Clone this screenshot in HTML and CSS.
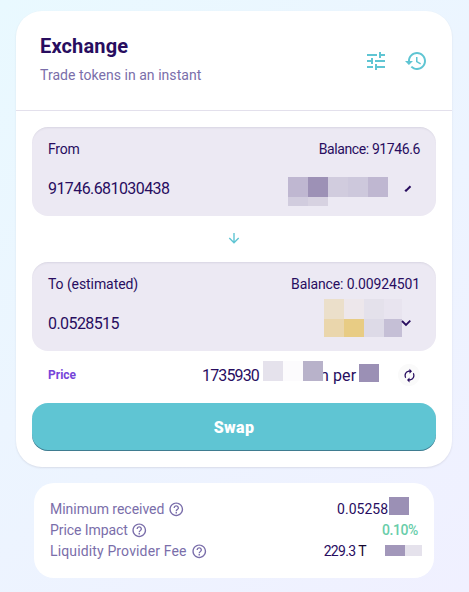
FILE: index.html
```html
<!DOCTYPE html>
<html lang="en">
<head>
<meta charset="utf-8">
<title>Exchange</title>
<link rel="stylesheet" href="styles.css">
</head>
<body>
<svg width="0" height="0" class="defs">
  <symbol id="help" viewBox="0 0 24 24"><path d="M11 18h2v-2h-2v2zm1-16C6.480 2 2 6.480 2 12s4.480 10 10 10 10-4.480 10-10S17.520 2 12 2zm0 18c-4.410 0-8-3.590-8-8s3.590-8 8-8 8 3.590 8 8-3.590 8-8 8zm0-14c-2.210 0-4 1.790-4 4h2c0-1.100.9-2 2-2s2 .9 2 2c0 2-3 1.750-3 5h2c0-2.250 3-2.500 3-5 0-2.210-1.790-4-4-4z"/></symbol>
</svg>
<main class="card">
  <header class="head">
    <div>
      <h1>Exchange</h1>
      <p>Trade tokens in an instant</p>
    </div>
    <div class="tools">
      <svg width="24" height="24" viewBox="0 0 24 24"><path d="M3 17v2h6v-2H3zM3 5v2h10V5H3zm10 16v-2h8v-2h-8v-2h-2v6h2zM7 9v2H3v2h4v2h2V9H7zm14 4v-2H11v2h10zm-6-4h2V7h4V5h-4V3h-2v6z"/></svg>
      <svg width="24" height="24" viewBox="0 0 24 24"><path d="M13 3c-4.970 0-9 4.030-9 9H1l3.890 3.890.07.14L9 12H6c0-3.870 3.130-7 7-7s7 3.130 7 7-3.130 7-7 7c-1.930 0-3.680-.79-4.940-2.060l-1.420 1.420C8.270 19.990 10.510 21 13 21c4.970 0 9-4.030 9-9s-4.030-9-9-9zm-1 5v5l4.280 2.540.72-1.210-3.500-2.080V8H12z"/></svg>
    </div>
  </header>
  <section class="body">
    <div class="field">
      <div class="row label"><span class="t-from">From</span><span class="t-bal1">Balance: 91746.6</span></div>
      <div class="row amount"><span>91746.681030438</span>
        <svg class="token" width="132" height="38" viewBox="0 0 132 38" shape-rendering="crispEdges">
          <path fill="#bfb7d1" d="M0 8h20v20H0zM80 8h20v20H80z"/><path fill="#9d91b6" d="M20 8h20v20H20z"/><path fill="#d1ccde" d="M40 8h20v20H40zM0 28h20v9H0z"/><path fill="#cdc8dc" d="M60 8h20v20H60z"/><path fill="#d7d2e1" d="M20 28h20v9H20z"/>
          <path shape-rendering="auto" fill="none" stroke="#280d5f" stroke-width="2" d="M117 21l1 .7 4.500-4.500"/>
        </svg>
      </div>
    </div>
    <svg class="arrow" width="16" height="16" viewBox="0 0 16 16"><path d="M8 3v9.500M3.300 8l4.700 4.700L12.700 8" fill="none" stroke="#5fc5d3" stroke-width="1.400"/></svg>
    <div class="field">
      <div class="row label"><span class="t-to">To (estimated)</span><span class="t-bal2">Balance: 0.00924501</span></div>
      <div class="row amount"><span>0.0528515</span>
        <svg class="token token-to" width="96" height="48" viewBox="0 0 96 48" shape-rendering="crispEdges">
          <path fill="#ebdfca" d="M0 0h20v20H0z"/><path fill="#ede7eb" d="M20 0h20v20H20z"/><path fill="#e4e1eb" d="M40 0h20v20H40z"/><path fill="#e8e4ef" d="M60 0h18v20H60z"/>
          <path fill="#ead6ac" d="M0 20h20v18H0z"/><path fill="#e8cc84" d="M20 20h20v18H20z"/><path fill="#dddae7" d="M40 20h20v18H40z"/><path fill="#c5bfd6" d="M60 20h18v18H60z"/>
          <path shape-rendering="auto" fill="none" stroke="#280d5f" stroke-width="1.800" d="M78 22l4 4 4.300-4.300"/>
        </svg>
      </div>
    </div>
    <div class="price">
      <b>Price</b>
      <div class="rate"><span class="t-rate">1735930</span>
        <svg class="mask3" width="60" height="20" shape-rendering="crispEdges"><path fill="#e5e2ec" d="M0 0h20v20H0z"/><path fill="#fcfbfd" d="M20 0h20v20H20z"/><path fill="#b8b2ca" d="M40 0h20v20H40z"/></svg>
        <span class="tail">n</span><span class="t-per">per</span><i class="mask1"></i>
      </div>
      <span class="refresh"><svg width="15" height="15" viewBox="0 0 24 24"><path d="M12 6v3l4-4-4-4v3c-4.420 0-8 3.580-8 8 0 1.570.46 3.030 1.240 4.260L6.700 14.800c-.45-.83-.7-1.790-.7-2.800 0-3.310 2.690-6 6-6zm6.760 1.740L17.300 9.200c.44.84.7 1.790.7 2.800 0 3.310-2.690 6-6 6v-3l-4 4 4 4v-3c4.420 0 8-3.580 8-8 0-1.570-.46-3.030-1.240-4.260z"/></svg></span>
    </div>
    <button>Swap</button>
  </section>
</main>
<section class="details">
  <div class="line"><span class="t-min">Minimum received</span><svg class="q"><use href="#help"/></svg><span class="val v1">0.05258<i class="mask1"></i></span></div>
  <div class="line"><span class="t-imp">Price Impact</span><svg class="q"><use href="#help"/></svg><span class="val green">0.10%</span></div>
  <div class="line"><span class="t-fee">Liquidity Provider Fee</span><svg class="q"><use href="#help"/></svg><span class="val v3"><span>229.3 <span class="dark">T</span></span><i class="mask2"></i></span></div>
</section>
</body>
</html>
```
FILE: styles.css
```css
* { box-sizing: border-box; }
body {
  margin: 0;
  height: 592px;
  padding: 11px 17px 0 16px;
  overflow: hidden;
  font: 14px/20px Roboto, sans-serif;
  color: #280d5f;
  background: linear-gradient(140deg, #e9f9ff 0%, #f0f0ff 100%);
}
.defs { position: absolute; }
.card {
  height: 456px;
  border-radius: 26px;
  background: #fff;
  box-shadow: 0 1px 2px rgba(25, 19, 38, .1);
}
.head {
  height: 100px;
  padding: 0 24px;
  display: flex;
  justify-content: space-between;
  align-items: center;
  border-bottom: 1px solid #e3e0ec;
}
h1 { margin: -3px 0 7px; font-size: 20px; line-height: 24px; font-weight: 700; letter-spacing: .15px; }
p { margin: 0; color: #7a6eaa; letter-spacing: .04px; }
.tools { display: flex; gap: 16px; fill: #5fc5d3; }
.body { padding: 16px; }
.field {
  height: 89px;
  padding: 12px 16px;
  border-radius: 16px;
  background: #ece9f3;
  box-shadow: inset 0 2px 2px -1px rgba(74, 74, 104, .12);
}
.row { display: flex; justify-content: space-between; }
.label { height: 20px; }
.t-from { letter-spacing: -.2px; }
.t-bal1 { letter-spacing: -.4px; }
.t-to { letter-spacing: -.08px; }
.t-bal2 { letter-spacing: -.12px; }
.amount { height: 48px; margin-top: 9px; font-size: 16px; letter-spacing: -.58px; }
.amount > span { margin-top: 11px; }
.token { overflow: visible; margin-top: 1px; }
.token-to { margin-top: -4px; }
.arrow { display: block; margin: 14px auto 16px; }
.price { display: flex; height: 52px; padding: 10px 16px 0; }
.price b { width: 154px; font-size: 12px; line-height: 28px; color: #7645d9; }
.rate { display: flex; width: 196px; font-size: 16px; line-height: 29px; }
.t-rate { width: 61px; flex: none; letter-spacing: -.85px; }
.mask3 { flex: none; position: relative; z-index: 1; }
.tail { width: 9px; margin-left: -3px; flex: none; }
.t-per { width: 26px; margin-left: 4px; flex: none; letter-spacing: .1px; }
.mask1 { width: 20px; height: 18px; margin-top: 3px; background: #9b90b5; flex: none; }
.refresh {
  width: 22px;
  height: 22px;
  margin-top: 3px;
  border-radius: 50%;
  background: #fafafa;
  display: flex;
  align-items: center;
  justify-content: center;
  fill: #280d5f;
}
button {
  display: block;
  width: 100%;
  height: 48px;
  padding: 2px 0 0;
  border: 0;
  border-radius: 16px;
  background: #5fc5d3;
  box-shadow: inset 0 -1px 0 rgba(14, 14, 44, .4);
  color: #fff;
  font: 900 16px/24px Roboto, sans-serif;
  letter-spacing: .4px;
}
.details {
  width: 400px;
  height: 95px;
  margin: 16px 0 0 18px;
  padding: 16px;
  border-radius: 20px;
  background: #fff;
  color: #7a6eaa;
}
.line { display: flex; height: 21px; line-height: 21px; }
.t-min { width: 114px; letter-spacing: -.02px; white-space: nowrap; }
.t-imp { width: 77px; letter-spacing: -.08px; white-space: nowrap; }
.t-fee { width: 137px; letter-spacing: .14px; white-space: nowrap; }
.q { width: 16.500px; height: 16.500px; margin: 2px 0 0 4px; fill: #7a6eaa; }
.val { margin-left: auto; display: flex; color: #280d5f; }
.green { color: #68cda9; font-weight: 500; letter-spacing: -.4px; }
.v1 { margin-right: 9px; }
.v1 .mask1 { margin-top: -2px; margin-left: 1px; }
.v3 { margin-right: -4px; letter-spacing: -.7px; word-spacing: .5px; }
.mask2 { width: 37px; height: 11px; margin: 4px 0 0 19px; background: linear-gradient(90deg, #a297ba 20px, #e5e2ec 20px); }
.dark { color: #16072f; }
```
